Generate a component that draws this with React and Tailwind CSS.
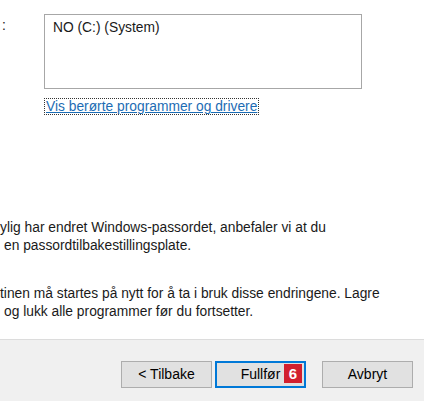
const font = { fontFamily: '"Liberation Sans", Arial, sans-serif' };

const Button = ({ children, focused }) => (
  <div
    className={`relative h-[27px] w-[91px] flex items-center justify-center bg-[#e1e1e1] text-[14px] text-black ${
      focused ? "border-2 border-[#0078d7]" : "border border-[#adadad]"
    }`}
  >
    {children}
  </div>
);

export default function App() {
  return (
    <div
      className="w-[424px] h-[401px] bg-white flex flex-col overflow-hidden text-[13.8px] text-[#1a1a1a]"
      style={font}
    >
      <div className="flex-1">
        {/* Drive list */}
        <div className="flex pt-[14px]">
          <div className="w-[44px] pl-[2px] pt-[4px] leading-[16px]">:</div>
          <div className="flex flex-col items-start">
            <div className="w-[318px] h-[75px] border border-[#a7a7a7] px-[8px] pt-[5px] leading-[16px]">
              NO (C:) (System)
            </div>
            <a
              href="#"
              className="mt-[9px] px-[1px] leading-[15px] border border-dotted border-[#333] text-[#1c6cb4] underline text-[13.8px]"
            >
              Vis berørte programmer og drivere
            </a>
          </div>
        </div>

        {/* Notes */}
        <div className="mt-[104px] leading-[18px] whitespace-nowrap">
          <p>ylig har endret Windows-passordet, anbefaler vi at du</p>
          <p className="pl-[4px]">en passordtilbakestillingsplate.</p>
          <p className="mt-[30px]">tinen må startes på nytt for å ta i bruk disse endringene. Lagre</p>
          <p className="pl-[4px]">og lukk alle programmer før du fortsetter.</p>
        </div>
      </div>

      {/* Footer */}
      <div className="h-[62px] border-t border-[#dcdcdc] bg-[#f0f0f0] flex items-start justify-end pt-[21px] pr-[11px]">
        <Button>&lt; Tilbake</Button>
        <div className="ml-[3px]">
          <Button focused>
            Fullfør
            <span className="absolute left-[67px] top-[1px] h-[19px] w-[18px] bg-[#d21f2f] text-white font-bold text-[15px] leading-[19px] flex items-center justify-center">
              6
            </span>
          </Button>
        </div>
        <div className="ml-[16px]">
          <Button>Avbryt</Button>
        </div>
      </div>
    </div>
  );
}
